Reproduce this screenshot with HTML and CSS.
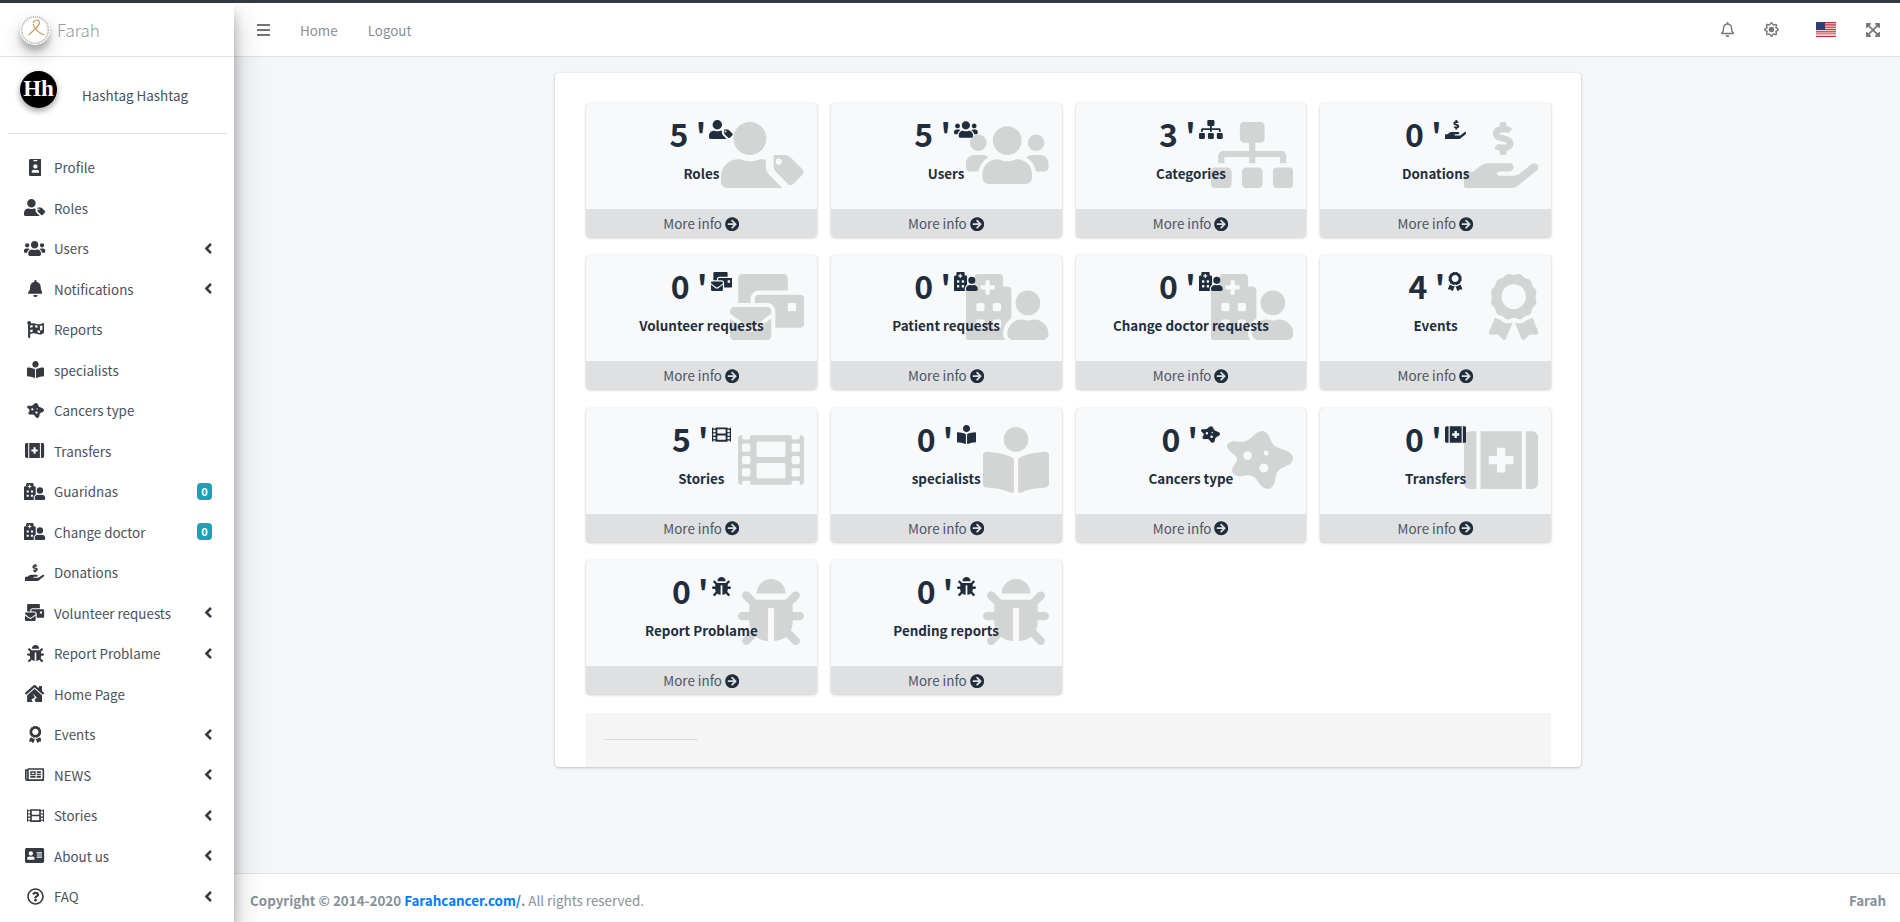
FILE: index.html
```html
<!DOCTYPE html>
<html lang="en">
<head>
    <meta charset="UTF-8">
    <title>Farah</title>
    <link rel="stylesheet" href="styles.css">
</head>
<body>
<svg class="sprite" aria-hidden="true">
    <defs>
        <path id="id-badge" d="M336 0H48C21.5 0 0 21.5 0 48v416c0 26.5 21.5 48 48 48h288c26.5 0 48-21.5 48-48V48c0-26.5-21.5-48-48-48zM144 32h96c8.8 0 16 7.2 16 16s-7.2 16-16 16h-96c-8.8 0-16-7.2-16-16s7.2-16 16-16zm48 128c35.3 0 64 28.7 64 64s-28.7 64-64 64-64-28.7-64-64 28.7-64 64-64zm112 236.8c0 10.6-10 19.2-22.4 19.2H102.4C90 416 80 407.4 80 396.8v-19.2c0-31.8 30.1-57.6 67.2-57.6h5c12.3 5.1 25.7 8 39.8 8s27.6-2.9 39.8-8h5c37.1 0 67.2 25.8 67.2 57.6v19.2z"/>
        <path id="user-tag" fill-rule="evenodd" d="M224 256A128 128 0 1 0 224 0a128 128 0 0 0 0 256zM48 512a48 48 0 0 1-48-48v-41.6C0 348.1 60.2 288 134.4 288h16.7c22.2 10.2 46.9 16 72.9 16s50.7-5.8 72.9-16h16.7c12 0 23 1.5 34 4.5V344c0 25 10 50 28 68l100 100zM630.6 364.9l-90.3-90.2c-12-12-28.3-18.7-45.3-18.7h-79c-4.4 0-8 3.6-8 8v79.3c0 17 6.7 33.2 18.7 45.2l90.3 90.2c12.5 12.5 32.8 12.5 45.2 0l68.7-68.7c12.5-12.4 12.5-32.7-.3-45.1zM448 331a24 24 0 1 1 0-48 24 24 0 0 1 0 48z"/>
        <path id="users" d="M96 224c35.3 0 64-28.7 64-64s-28.7-64-64-64-64 28.7-64 64 28.7 64 64 64zm448 0c35.3 0 64-28.7 64-64s-28.7-64-64-64-64 28.7-64 64 28.7 64 64 64zm32 32h-64c-17.6 0-33.5 7.1-45.1 18.6 40.3 22.1 68.9 62 75.1 109.4h66c17.7 0 32-14.3 32-32v-32c0-35.3-28.7-64-64-64zm-256 0c61.9 0 112-50.1 112-112S381.9 32 320 32 208 82.1 208 144s50.1 112 112 112zm76.8 32h-8.3c-20.8 10-43.9 16-68.5 16s-47.6-6-68.5-16h-8.3C179.6 288 128 339.6 128 403.2V432c0 26.5 21.5 48 48 48h288c26.5 0 48-21.5 48-48v-28.8c0-63.6-51.6-115.2-115.2-115.2zm-223.7-13.4C161.5 263.1 145.6 256 128 256H64c-35.3 0-64 28.7-64 64v32c0 17.7 14.3 32 32 32h65.9c6.3-47.4 34.9-87.3 75.2-109.4z"/>
        <path id="bell" d="M224 512c35.32 0 63.97-28.65 63.97-64H160.03c0 35.35 28.65 64 63.97 64zm215.39-149.71c-19.32-20.76-55.47-51.99-55.47-154.29 0-77.7-54.48-139.9-127.94-155.16V32c0-17.67-14.32-32-31.98-32s-31.98 14.33-31.98 32v20.84C118.56 68.1 64.08 130.3 64.08 208c0 102.3-36.15 133.53-55.47 154.29-6 6.45-8.66 14.16-8.61 21.71.11 16.4 12.98 32 32.1 32h383.8c19.12 0 32-15.6 32.1-32 .05-7.55-2.61-15.27-8.61-21.71z"/>
        <path id="bell-o" d="M439.39 362.29c-19.32-20.76-55.47-51.99-55.47-154.29 0-77.7-54.48-139.9-127.94-155.16V32c0-17.67-14.32-32-31.98-32s-31.98 14.33-31.98 32v20.84C118.56 68.1 64.08 130.3 64.08 208c0 102.3-36.15 133.53-55.47 154.29-6 6.45-8.66 14.16-8.61 21.71.11 16.4 12.98 32 32.1 32h383.8c19.12 0 32-15.6 32.1-32 .05-7.55-2.61-15.27-8.61-21.71zM67.53 368c21.22-27.97 44.42-74.33 44.53-159.42 0-.2-.06-.38-.06-.58 0-61.86 50.14-112 112-112s112 50.14 112 112c0 .2-.06.38-.06.58.11 85.1 23.31 131.46 44.53 159.42H67.53zM224 512c35.32 0 63.97-28.65 63.97-64H160.03c0 35.35 28.65 64 63.97 64z"/>
        <path id="flag" fill-rule="evenodd" d="M466.5 66.9c-34.3 15.9-76.5 31.9-117 31.9C296 98.8 251.7 64 184.3 64c-25 0-47.3 4.4-68 12 2.8-7.3 4.1-15.2 3.6-23.6C118.1 24 94.8 1.2 66.3 0 34.3-1.3 8 24.3 8 56c0 19 9.5 35.8 24 45.9V488c0 13.3 10.7 24 24 24h16c13.3 0 24-10.7 24-24v-94.4c28.3-12.1 63.6-22.1 114.4-22.1 53.6 0 97.8 34.8 165.2 34.8 48.2 0 86.7-16.3 122.5-40.9 8.7-6 13.8-15.8 13.8-26.4V95.9c.1-23.3-24.2-38.8-45.4-29zM96 134c24-9 48-15 73.6-17v68c-26 3-50 9-73.6 18zM243.2 118c26 6 49 15 73.6 22v72c-25-6-48-16-73.6-22zM390 146c25-3 48-11 74-21v68c-24 11-48 19-74 22zM169.6 254c-26 3-50 9-73.6 18v68c24-9 48-15 73.6-18zM316.8 280v68c26 7 49 14 73.6 16v-70c-26 1-49-7-73.6-14zM464 266c-24 14-48 24-73.6 28v-79c26-2 50-10 73.6-22z"/>
        <path id="book-reader" d="M352 96c0-53.02-42.98-96-96-96s-96 42.98-96 96 42.98 96 96 96 96-42.98 96-96zM233.59 241.1c-59.33-36.32-155.43-46.3-203.79-49.05C13.55 191.13 0 203.51 0 219.14v222.8c0 14.33 11.59 26.28 26.49 27.05 43.66 2.29 131.99 10.68 193.04 41.43 9.37 4.72 20.48-1.71 20.48-11.87V252.56c-.01-4.67-2.32-8.95-6.42-11.46zm248.61-49.05c-48.35 2.74-144.46 12.73-203.78 49.05-4.1 2.51-6.41 6.96-6.41 11.63v245.79c0 10.19 11.14 16.63 20.54 11.9 61.04-30.72 149.32-39.11 192.97-41.4 14.9-.78 26.49-12.73 26.49-27.06V219.14c-.01-15.63-13.56-28.01-29.81-27.09z"/>
        <path id="disease" fill-rule="evenodd" d="M270 32C310 30 330 70 345 115C355 145 390 160 435 175C485 190 512 215 512 245C512 280 475 300 430 318C395 332 380 360 375 405C370 450 345 480 312 480C280 480 255 450 230 410C210 380 180 368 135 378C85 390 40 370 40 335C40 300 78 280 78 248C78 215 15 195 3 160C-8 125 30 108 75 112C115 116 150 118 180 90C210 60 235 32 270 32ZM159 189a33 33 0 1 0 0 66a33 33 0 1 0 0-66ZM304 185a19 19 0 1 0 0 38a19 19 0 1 0 0-38ZM286 283a35 35 0 1 0 0 70a35 35 0 1 0 0-70Z"/>
        <path id="first-aid" d="M0 80v352c0 26.5 21.5 48 48 48h48V32H48C21.5 32 0 53.5 0 80zm128 400h320V32H128v448zm64-248c0-4.4 3.6-8 8-8h56v-56c0-4.4 3.6-8 8-8h48c4.4 0 8 3.6 8 8v56h56c4.4 0 8 3.6 8 8v48c0 4.4-3.6 8-8 8h-56v56c0 4.4-3.6 8-8 8h-48c-4.4 0-8-3.6-8-8v-56h-56c-4.4 0-8-3.6-8-8v-48zM528 32h-48v448h48c26.5 0 48-21.5 48-48V80c0-26.5-21.5-48-48-48z"/>
        <path id="hospital-user" fill-rule="evenodd" d="M480 320a96 96 0 1 0-96-96 96 96 0 0 0 96 96zm48 32a22.88 22.88 0 0 0-7.06 1.09 124.76 124.76 0 0 1-81.89 0A22.82 22.82 0 0 0 432 352a112 112 0 0 0-112 112.62c.14 26.26 21.73 47.38 48 47.38h224c26.27 0 47.86-21.12 48-47.38A112 112 0 0 0 528 352zm-198.09 10.45A145.19 145.19 0 0 1 352 344.62V128a32 32 0 0 0-32-32h-32V32a32 32 0 0 0-32-32H96a32 32 0 0 0-32 32v64H32a32 32 0 0 0-32 32v368a16 16 0 0 0 16 16h288.31A78.62 78.62 0 0 1 288 464.79a143.06 143.06 0 0 1 41.91-102.34zM92 352h40a12 12 0 0 1 12 12v40a12 12 0 0 1-12 12H92a12 12 0 0 1-12-12v-40a12 12 0 0 1 12-12zM92 224h40a12 12 0 0 1 12 12v40a12 12 0 0 1-12 12H92a12 12 0 0 1-12-12v-40a12 12 0 0 1 12-12zM220 352h40a12 12 0 0 1 12 12v40a12 12 0 0 1-12 12h-40a12 12 0 0 1-12-12v-40a12 12 0 0 1 12-12zM220 224h40a12 12 0 0 1 12 12v40a12 12 0 0 1-12 12h-40a12 12 0 0 1-12-12v-40a12 12 0 0 1 12-12zM160 48h16a8 8 0 0 1 8 8v32h32a8 8 0 0 1 8 8v16a8 8 0 0 1-8 8h-32v32a8 8 0 0 1-8 8h-16a8 8 0 0 1-8-8v-32h-32a8 8 0 0 1-8-8V96a8 8 0 0 1 8-8h32V56a8 8 0 0 1 8-8z"/>
        <path id="hand-usd" d="M271.06 144.3l54.27 14.3a8.59 8.59 0 0 1 6.63 8.1c0 4.6-4.09 8.4-9.12 8.4h-35.6a30 30 0 0 1-11.19-2.2c-5.24-2.2-11.28-1.7-15.3 2l-19 17.5a11.68 11.68 0 0 0-2.25 2.66 11.42 11.42 0 0 0 3.88 15.74 83.77 83.77 0 0 0 34.51 11.5V240c0 8.8 7.83 16 17.37 16h17.37c9.55 0 17.38-7.2 17.38-16v-17.6c32.93-3.6 57.84-31 53.5-63-3.15-23-22.46-41.3-46.56-47.7l-54.27-14.3a8.59 8.59 0 0 1-6.63-8.1c0-4.6 4.09-8.4 9.12-8.4h35.6A30 30 0 0 1 332 83.1c5.23 2.2 11.28 1.7 15.3-2l19-17.5a11.31 11.31 0 0 0 2.17-2.6 11.43 11.43 0 0 0-3.84-15.78 83.82 83.82 0 0 0-34.52-11.5V16c0-8.8-7.82-16-17.37-16h-17.37C285.82 0 278 7.2 278 16v17.6c-32.89 3.6-57.85 31-53.51 63 3.14 23 22.51 41.3 46.57 47.7zM565.27 328.1c-11.8-10.7-30.2-10-42.6 0L430.27 402a63.64 63.64 0 0 1-40 14H272a16 16 0 0 1 0-32h78.29c15.9 0 30.71-10.9 33.25-26.6a31.2 31.2 0 0 0 .46-5.46A32 32 0 0 0 352 320H192a117.66 117.66 0 0 0-74.1 26.29L71.4 384H16a16 16 0 0 0-16 16v96a16 16 0 0 0 16 16h356.77a64 64 0 0 0 40-14L564 377a32 32 0 0 0 1.28-48.9z"/>
        <path id="mail-bulk" d="M160 448c-25.6 0-51.2-22.4-64-32-64-44.8-83.2-60.8-96-70.4V480c0 17.67 14.33 32 32 32h256c17.67 0 32-14.33 32-32V345.6c-12.8 9.6-32 25.6-96 70.4-12.8 9.6-38.4 32-64 32zm128-192H32c-17.67 0-32 14.33-32 32v16c25.6 19.2 22.4 19.2 115.2 86.4 9.6 6.4 28.8 25.6 44.8 25.6s35.2-19.2 44.8-22.4c92.8-67.2 89.6-67.2 115.2-86.4V288c0-17.67-14.33-32-32-32zm256-96H224c-17.67 0-32 14.33-32 32v32h96c33.21 0 60.59 25.42 63.71 57.82l.29-.22V416h192c17.67 0 32-14.33 32-32V192c0-17.67-14.33-32-32-32zm-32 128h-64v-64h64v64zm-352-96c0-35.29 28.71-64 64-64h224V32c0-17.67-14.33-32-32-32H96C78.33 0 64 14.33 64 32v192h96v-32z"/>
        <path id="bug" d="M511.988 288.9c-.478 17.43-15.217 31.1-32.653 31.1H424v16c0 21.864-4.882 42.584-13.6 61.145l60.228 60.228c12.496 12.497 12.496 32.758 0 45.255-12.498 12.497-32.759 12.496-45.256 0l-54.736-54.736C345.886 467.965 314.351 480 280 480V236c0-6.627-5.373-12-12-12h-24c-6.627 0-12 5.373-12 12v244c-34.351 0-65.886-12.035-90.636-32.108l-54.736 54.736c-12.498 12.497-32.759 12.496-45.256 0-12.496-12.497-12.496-32.758 0-45.255l60.228-60.228C92.882 378.584 88 357.864 88 336v-16H32.666C15.23 320 .491 306.33.013 288.9-.484 270.816 14.028 256 32 256h56v-58.745l-46.628-46.628c-12.496-12.497-12.496-32.758 0-45.255 12.498-12.497 32.758-12.497 45.256 0L141.255 160h229.489l54.627-54.627c12.498-12.497 32.758-12.497 45.256 0 12.496 12.497 12.496 32.758 0 45.255L424 197.255V256h56c17.972 0 32.484 14.816 31.988 32.9zM257 0c-61.856 0-112 50.144-112 112h224C369 50.144 318.856 0 257 0z"/>
        <path id="house-damage" d="M288 114.96L69.47 307.71c-1.62 1.46-3.69 2.14-5.47 3.35V496c0 8.84 7.16 16 16 16h149.23L192 439.19l104.11-64-60.16-119.22L358 387l-70 50 33 75h175c8.84 0 16-7.16 16-16V311.1c-1.7-1.16-3.72-1.82-5.26-3.2L288 114.96zm282.69 121.32L512 184.45V48c0-8.84-7.16-16-16-16h-64c-8.84 0-16 7.16-16 16v51.69L314.75 10.31C307.12 3.45 297.56.01 288 0s-19.1 3.41-26.7 10.27L5.31 236.28c-6.57 5.91-7.12 16.02-1.21 22.6l21.4 23.82c5.9 6.57 16.02 7.12 22.6 1.21L277.42 81.63c6.05-5.33 15.12-5.33 21.17 0L527.91 283.9c6.57 5.9 16.69 5.36 22.6-1.21l21.4-23.82c5.9-6.57 5.36-16.69-1.22-22.59z"/>
        <path id="award" d="M97.12 362.63c-8.69-8.69-4.16-6.24-25.12-11.85-9.51-2.55-17.87-7.45-25.43-13.32L1.2 448.7c-4.39 10.77 3.81 22.47 15.43 22.03l52.69-2.01L105.56 507c8 8.44 22.04 5.81 26.43-4.96l52.05-127.62c-10.84 6.04-22.87 9.58-35.31 9.58-19.5 0-37.82-7.59-51.61-21.37zM382.8 448.7l-45.37-111.24c-7.56 5.88-15.92 10.77-25.43 13.32-21.07 5.64-16.45 3.18-25.12 11.85-13.79 13.78-32.12 21.37-51.62 21.37-12.44 0-24.47-3.55-35.31-9.58L252 502.04c4.39 10.77 18.44 13.4 26.43 4.96l36.25-38.28 52.69 2.01c11.62.44 19.82-11.27 15.43-22.03zM263 340c15.28-15.55 17.03-14.21 38.79-20.14 13.89-3.79 24.75-14.84 28.47-28.98 7.48-28.4 5.54-24.97 25.95-45.75 10.17-10.35 14.14-25.44 10.42-39.58-7.47-28.38-7.48-24.42 0-52.83 3.72-14.14-.25-29.23-10.42-39.58-20.41-20.78-18.47-17.36-25.95-45.75-3.72-14.14-14.58-25.19-28.47-28.98-27.88-7.61-24.52-5.62-44.95-26.41-10.17-10.35-25-14.4-38.89-10.61-27.87 7.6-23.98 7.61-51.9 0-13.89-3.79-28.72.25-38.89 10.61-20.41 20.78-17.05 18.8-44.94 26.41-13.89 3.79-24.75 14.84-28.47 28.98-7.47 28.39-5.54 24.97-25.95 45.75-10.17 10.35-14.15 25.44-10.42 39.58 7.47 28.36 7.48 24.4 0 52.82-3.72 14.14.25 29.23 10.42 39.59 20.41 20.78 18.47 17.35 25.95 45.75 3.72 14.14 14.58 25.19 28.47 28.98C104.6 325.96 106.27 325 121 340c13.23 13.47 33.84 15.88 49.74 5.82a39.676 39.676 0 0 1 42.53 0c15.89 10.06 36.5 7.65 49.73-5.82zM97.66 175.96c0-53.03 42.24-96.02 94.34-96.02s94.34 42.99 94.34 96.02-42.24 96.02-94.34 96.02-94.34-42.99-94.34-96.02z"/>
        <path id="newspaper" d="M552 64H112c-20.858 0-38.643 13.377-45.248 32H24c-13.255 0-24 10.745-24 24v272c0 30.928 25.072 56 56 56h496c13.255 0 24-10.745 24-24V88c0-13.255-10.745-24-24-24zM48 392V144h16v248c0 4.411-3.589 8-8 8s-8-3.589-8-8zm480 8H111.422c.374-2.614.578-5.283.578-8V112h416v288zM172 280h136c6.627 0 12-5.373 12-12v-96c0-6.627-5.373-12-12-12H172c-6.627 0-12 5.373-12 12v96c0 6.627 5.373 12 12 12zm28-80h80v40h-80v-40zm-40 140v-24c0-6.627 5.373-12 12-12h136c6.627 0 12 5.373 12 12v24c0 6.627-5.373 12-12 12H172c-6.627 0-12-5.373-12-12zm192 0v-24c0-6.627 5.373-12 12-12h104c6.627 0 12 5.373 12 12v24c0 6.627-5.373 12-12 12H364c-6.627 0-12-5.373-12-12zm0-144v-24c0-6.627 5.373-12 12-12h104c6.627 0 12 5.373 12 12v24c0 6.627-5.373 12-12 12H364c-6.627 0-12-5.373-12-12zm0 72v-24c0-6.627 5.373-12 12-12h104c6.627 0 12 5.373 12 12v24c0 6.627-5.373 12-12 12H364c-6.627 0-12-5.373-12-12z"/>
        <path id="film" d="M488 64h-8v20c0 6.6-5.4 12-12 12h-40c-6.6 0-12-5.4-12-12V64H96v20c0 6.6-5.4 12-12 12H44c-6.6 0-12-5.4-12-12V64h-8C10.7 64 0 74.7 0 88v336c0 13.3 10.7 24 24 24h8v-20c0-6.6 5.4-12 12-12h40c6.6 0 12 5.4 12 12v20h320v-20c0-6.6 5.4-12 12-12h40c6.6 0 12 5.4 12 12v20h8c13.3 0 24-10.7 24-24V88c0-13.3-10.7-24-24-24zM96 372c0 6.6-5.4 12-12 12H44c-6.6 0-12-5.4-12-12v-40c0-6.6 5.4-12 12-12h40c6.6 0 12 5.4 12 12v40zm0-96c0 6.6-5.4 12-12 12H44c-6.6 0-12-5.4-12-12v-40c0-6.6 5.4-12 12-12h40c6.6 0 12 5.4 12 12v40zm0-96c0 6.6-5.4 12-12 12H44c-6.6 0-12-5.4-12-12v-40c0-6.6 5.4-12 12-12h40c6.6 0 12 5.4 12 12v40zm272 208c0 6.6-5.4 12-12 12H156c-6.6 0-12-5.4-12-12v-96c0-6.6 5.4-12 12-12h200c6.6 0 12 5.4 12 12v96zm0-168c0 6.6-5.4 12-12 12H156c-6.6 0-12-5.4-12-12v-96c0-6.6 5.4-12 12-12h200c6.6 0 12 5.4 12 12v96zm112 152c0 6.6-5.4 12-12 12h-40c-6.6 0-12-5.4-12-12v-40c0-6.6 5.4-12 12-12h40c6.6 0 12 5.4 12 12v40zm0-96c0 6.6-5.4 12-12 12h-40c-6.6 0-12-5.4-12-12v-40c0-6.6 5.4-12 12-12h40c6.6 0 12 5.4 12 12v40zm0-96c0 6.6-5.4 12-12 12h-40c-6.6 0-12-5.4-12-12v-40c0-6.6 5.4-12 12-12h40c6.6 0 12 5.4 12 12v40z"/>
        <path id="address-card" d="M528 32H48C21.5 32 0 53.5 0 80v352c0 26.5 21.5 48 48 48h480c26.5 0 48-21.5 48-48V80c0-26.5-21.5-48-48-48zm-352 96c35.3 0 64 28.7 64 64s-28.7 64-64 64-64-28.7-64-64 28.7-64 64-64zm112 236.8c0 10.6-10 19.2-22.4 19.2H86.4C74 384 64 375.4 64 364.8v-19.2c0-31.8 30.1-57.6 67.2-57.6h5c12.3 5.1 25.7 8 39.8 8s27.6-2.9 39.8-8h5c37.1 0 67.2 25.8 67.2 57.6v19.2zM512 312c0 4.4-3.6 8-8 8H360c-4.4 0-8-3.6-8-8v-16c0-4.4 3.6-8 8-8h144c4.4 0 8 3.6 8 8v16zm0-64c0 4.4-3.6 8-8 8H360c-4.4 0-8-3.6-8-8v-16c0-4.4 3.6-8 8-8h144c4.4 0 8 3.6 8 8v16zm0-64c0 4.4-3.6 8-8 8H360c-4.4 0-8-3.6-8-8v-16c0-4.4 3.6-8 8-8h144c4.4 0 8 3.6 8 8v16z"/>
        <path id="question" d="M256 8C119.043 8 8 119.083 8 256c0 136.997 111.043 248 248 248s248-111.003 248-248C504 119.083 392.957 8 256 8zm0 448c-110.532 0-200-89.431-200-200 0-110.495 89.472-200 200-200 110.491 0 200 89.471 200 200 0 110.53-89.431 200-200 200zm107.244-255.2c0 67.052-72.421 68.084-72.421 92.863V300c0 6.627-5.373 12-12 12h-45.647c-6.627 0-12-5.373-12-12v-8.659c0-35.745 27.1-50.034 47.579-61.516 17.561-9.845 28.324-16.541 28.324-29.579 0-17.246-21.999-28.693-39.784-28.693-23.189 0-33.894 10.977-48.942 29.969-4.057 5.12-11.46 6.071-16.666 2.124l-27.824-21.098c-5.107-3.872-6.251-11.066-2.644-16.363C184.846 131.491 214.94 112 261.794 112c49.071 0 101.45 38.304 101.45 88.8zM298 368c0 23.159-18.841 42-42 42s-42-18.841-42-42 18.841-42 42-42 42 18.841 42 42z"/>
        <path id="sitemap" d="M128 352H32c-17.67 0-32 14.33-32 32v96c0 17.67 14.33 32 32 32h96c17.67 0 32-14.33 32-32v-96c0-17.67-14.33-32-32-32zm-24-80h192v48h48v-48h192v48h48v-57.59c0-21.17-17.23-38.41-38.41-38.41H344v-64h40c17.67 0 32-14.33 32-32V32c0-17.67-14.33-32-32-32H256c-17.67 0-32 14.33-32 32v96c0 17.67 14.33 32 32 32h40v64H94.41C73.23 224 56 241.23 56 262.41V320h48v-48zm264 80h-96c-17.67 0-32 14.33-32 32v96c0 17.67 14.33 32 32 32h96c17.67 0 32-14.33 32-32v-96c0-17.67-14.33-32-32-32zm240 0h-96c-17.67 0-32 14.33-32 32v96c0 17.67 14.33 32 32 32h96c17.67 0 32-14.33 32-32v-96c0-17.67-14.33-32-32-32z"/>
        <path id="arrow" d="M256 8c137 0 248 111 248 248S393 504 256 504 8 393 8 256 119 8 256 8zm-28.9 143.6l75.5 72.4H120c-13.3 0-24 10.7-24 24v16c0 13.3 10.7 24 24 24h182.6l-75.5 72.4c-9.7 9.3-9.9 24.8-.4 34.3l11 10.9c9.4 9.4 24.6 9.4 33.9 0L404.3 273c9.4-9.4 9.4-24.6 0-33.9L271.6 106.3c-9.4-9.4-24.6-9.4-33.9 0l-11 10.9c-9.5 9.6-9.3 25.1.4 34.4z"/>
        <path id="angle" d="M31.7 239l136-136c9.4-9.4 24.6-9.4 33.9 0l22.6 22.6c9.4 9.4 9.4 24.6 0 33.9L127.9 256l96.4 96.4c9.4 9.4 9.4 24.6 0 33.9L201.7 409c-9.4 9.4-24.6 9.4-33.9 0l-136-136c-9.5-9.4-9.5-24.6-.1-34z"/>
        <path id="sun" fill-rule="evenodd" d="M494.2 221.9l-59.8-40.5 13.7-71c2.6-13.2-1.6-26.8-11.1-36.4-9.6-9.5-23.2-13.7-36.2-11.1l-70.9 13.7-40.4-59.9c-15.1-22.3-51.9-22.3-67 0l-40.4 59.9-70.8-13.7C98 60.4 84.5 64.5 75 74.1c-9.5 9.6-13.7 23.1-11.1 36.3l13.7 71-59.8 40.5C6.6 229.5 0 242 0 255.5s6.7 26 17.8 33.5l59.8 40.5-13.7 71c-2.6 13.2 1.6 26.8 11.1 36.3 9.5 9.5 22.9 13.7 36.3 11.1l70.8-13.7 40.4 59.9C230 505.3 242.6 512 256 512s26-6.7 33.5-17.8l40.4-59.9 70.9 13.7c13.4 2.7 26.8-1.6 36.3-11.1 9.5-9.5 13.6-23.1 11.1-36.3l-13.7-71 59.8-40.5c11.1-7.5 17.8-20.1 17.8-33.5-.1-13.6-6.7-26.1-17.9-33.7zm-112.9 85.6l17.6 91.2-91-17.6L256 458l-51.9-77-90.9 17.6 17.6-91.2-76.8-52 76.8-52-17.6-91.2 91 17.6L256 53l51.9 76.9 91-17.6-17.6 91.1 76.8 52-76.8 52.1zM256 161a95 95 0 1 0 0 190 95 95 0 0 0 0-190z"/>
        <path id="expand" d="M448 344v112a23.94 23.94 0 0 1-24 24H312c-21.39 0-32.09-25.9-17-41l36.2-36.2L224 295.6 116.77 402.9 153 439c15.09 15.1 4.39 41-17 41H24a23.94 23.94 0 0 1-24-24V344c0-21.4 25.89-32.1 41-17l36.19 36.2L184.46 256 77.18 148.7 41 185c-15.1 15.1-41 4.4-41-17V56a23.94 23.94 0 0 1 24-24h112c21.39 0 32.09 25.9 17 41l-36.2 36.2L224 216.4l107.23-107.3L295 73c-15.09-15.1-4.39-41 17-41h112a23.94 23.94 0 0 1 24 24v112c0 21.4-25.89 32.1-41 17l-36.19-36.2L263.54 256l107.28 107.3L407 327.1c15.1-15.2 41-4.5 41 16.9z"/>
    </defs>
</svg>

<div class="topline"></div>
<div class="wrapper">

    <!-- Sidebar -->
    <aside class="sidebar">
        <div class="brand">
            <svg class="brand-logo" viewBox="0 0 30 30">
                <circle cx="15" cy="15" r="15" fill="#fff"/>
                <circle cx="15" cy="15" r="13.300" fill="none" stroke="#bdb9b2" stroke-width="1.800" stroke-dasharray="1.200 .8"/>
                <path d="M13 8c.5-3 6-4 6.500-1s-4 7-11 13M13 9c1.500 4 5 9 11.500 11" fill="none" stroke="#c79c66" stroke-width="1.100"/>
            </svg>
            <span class="brand-text">Farah</span>
        </div>
        <div class="user-panel">
            <div class="avatar">Hh</div>
            <div class="user-name">Hashtag Hashtag</div>
        </div>
        <ul class="nav">
            <li><span class="nav-ico"><svg viewBox="0 0 384 512"><use href="#id-badge"/></svg></span>Profile</li>
            <li><span class="nav-ico"><svg viewBox="0 0 640 512"><use href="#user-tag"/></svg></span>Roles</li>
            <li><span class="nav-ico"><svg viewBox="0 0 640 512"><use href="#users"/></svg></span>Users<svg class="chev" viewBox="0 0 256 512"><use href="#angle"/></svg></li>
            <li><span class="nav-ico"><svg viewBox="0 0 448 512"><use href="#bell"/></svg></span>Notifications<svg class="chev" viewBox="0 0 256 512"><use href="#angle"/></svg></li>
            <li><span class="nav-ico"><svg viewBox="0 0 512 512"><use href="#flag"/></svg></span>Reports</li>
            <li><span class="nav-ico"><svg viewBox="0 0 512 512"><use href="#book-reader"/></svg></span>specialists</li>
            <li><span class="nav-ico"><svg viewBox="0 0 512 512"><use href="#disease"/></svg></span>Cancers type</li>
            <li><span class="nav-ico"><svg viewBox="0 0 576 512"><use href="#first-aid"/></svg></span>Transfers</li>
            <li><span class="nav-ico"><svg viewBox="0 0 640 512"><use href="#hospital-user"/></svg></span>Guaridnas<span class="badge">0</span></li>
            <li><span class="nav-ico"><svg viewBox="0 0 640 512"><use href="#hospital-user"/></svg></span>Change doctor<span class="badge">0</span></li>
            <li><span class="nav-ico"><svg viewBox="0 0 576 512"><use href="#hand-usd"/></svg></span>Donations</li>
            <li><span class="nav-ico"><svg viewBox="0 0 576 512"><use href="#mail-bulk"/></svg></span>Volunteer requests<svg class="chev" viewBox="0 0 256 512"><use href="#angle"/></svg></li>
            <li><span class="nav-ico"><svg viewBox="0 0 512 512"><use href="#bug"/></svg></span>Report Problame<svg class="chev" viewBox="0 0 256 512"><use href="#angle"/></svg></li>
            <li><span class="nav-ico"><svg viewBox="0 0 576 512"><use href="#house-damage"/></svg></span>Home Page</li>
            <li><span class="nav-ico"><svg viewBox="0 0 384 512"><use href="#award"/></svg></span>Events<svg class="chev" viewBox="0 0 256 512"><use href="#angle"/></svg></li>
            <li><span class="nav-ico"><svg viewBox="0 0 576 512"><use href="#newspaper"/></svg></span>NEWS<svg class="chev" viewBox="0 0 256 512"><use href="#angle"/></svg></li>
            <li><span class="nav-ico"><svg viewBox="0 0 512 512"><use href="#film"/></svg></span>Stories<svg class="chev" viewBox="0 0 256 512"><use href="#angle"/></svg></li>
            <li><span class="nav-ico"><svg viewBox="0 0 576 512"><use href="#address-card"/></svg></span>About us<svg class="chev" viewBox="0 0 256 512"><use href="#angle"/></svg></li>
            <li><span class="nav-ico"><svg viewBox="0 0 512 512"><use href="#question"/></svg></span>FAQ<svg class="chev" viewBox="0 0 256 512"><use href="#angle"/></svg></li>
        </ul>
    </aside>

    <div class="main">
        <!-- Top navbar -->
        <nav class="navbar">
            <div class="hamburger"><span></span><span></span><span></span></div>
            <a class="nav-link">Home</a>
            <a class="nav-link">Logout</a>
            <div class="nav-right">
                <svg class="nav-icon bell" viewBox="0 0 448 512"><use href="#bell-o"/></svg>
                <svg class="nav-icon sun" viewBox="0 0 512 512"><use href="#sun"/></svg>
                <svg class="us-flag" viewBox="0 0 20 15">
                    <rect width="20" height="15" fill="#f3c9cd"/>
                    <path d="M0 .6h20M0 2.900h20M0 5.200h20M0 7.500h20M0 9.800h20M0 12.100h20M0 14.400h20" stroke="#c8313f" stroke-width="1.100"/>
                    <path d="M0 12.900h20" stroke="#fff" stroke-width="1"/>
                    <rect width="9" height="8" fill="#2f3f73"/>
                </svg>
                <svg class="nav-icon expand" viewBox="0 0 448 512"><use href="#expand"/></svg>
            </div>
        </nav>

        <!-- Dashboard -->
        <main class="content">
            <section class="panel">
                <div class="stats">
                    <div class="stat">
                        <svg class="stat-bg" viewBox="0 0 640 512"><use href="#user-tag"/></svg>
                        <div class="stat-body">
                            <h3>5 ' <svg viewBox="0 0 640 512"><use href="#user-tag"/></svg></h3>
                            <p>Roles</p>
                        </div>
                        <a class="stat-more">More info <svg viewBox="0 0 512 512"><use href="#arrow"/></svg></a>
                    </div>
                    <div class="stat">
                        <svg class="stat-bg" viewBox="0 0 640 512"><use href="#users"/></svg>
                        <div class="stat-body">
                            <h3>5 ' <svg viewBox="0 0 640 512"><use href="#users"/></svg></h3>
                            <p>Users</p>
                        </div>
                        <a class="stat-more">More info <svg viewBox="0 0 512 512"><use href="#arrow"/></svg></a>
                    </div>
                    <div class="stat">
                        <svg class="stat-bg" viewBox="0 0 640 512"><use href="#sitemap"/></svg>
                        <div class="stat-body">
                            <h3>3 ' <svg viewBox="0 0 640 512"><use href="#sitemap"/></svg></h3>
                            <p>Categories</p>
                        </div>
                        <a class="stat-more">More info <svg viewBox="0 0 512 512"><use href="#arrow"/></svg></a>
                    </div>
                    <div class="stat">
                        <svg class="stat-bg" viewBox="0 0 576 512"><use href="#hand-usd"/></svg>
                        <div class="stat-body">
                            <h3>0 ' <svg viewBox="0 0 576 512"><use href="#hand-usd"/></svg></h3>
                            <p>Donations</p>
                        </div>
                        <a class="stat-more">More info <svg viewBox="0 0 512 512"><use href="#arrow"/></svg></a>
                    </div>
                    <div class="stat">
                        <svg class="stat-bg" viewBox="0 0 576 512"><use href="#mail-bulk"/></svg>
                        <div class="stat-body">
                            <h3>0 ' <svg viewBox="0 0 576 512"><use href="#mail-bulk"/></svg></h3>
                            <p>Volunteer requests</p>
                        </div>
                        <a class="stat-more">More info <svg viewBox="0 0 512 512"><use href="#arrow"/></svg></a>
                    </div>
                    <div class="stat">
                        <svg class="stat-bg" viewBox="0 0 640 512"><use href="#hospital-user"/></svg>
                        <div class="stat-body">
                            <h3>0 ' <svg viewBox="0 0 640 512"><use href="#hospital-user"/></svg></h3>
                            <p>Patient requests</p>
                        </div>
                        <a class="stat-more">More info <svg viewBox="0 0 512 512"><use href="#arrow"/></svg></a>
                    </div>
                    <div class="stat">
                        <svg class="stat-bg" viewBox="0 0 640 512"><use href="#hospital-user"/></svg>
                        <div class="stat-body">
                            <h3>0 ' <svg viewBox="0 0 640 512"><use href="#hospital-user"/></svg></h3>
                            <p>Change doctor requests</p>
                        </div>
                        <a class="stat-more">More info <svg viewBox="0 0 512 512"><use href="#arrow"/></svg></a>
                    </div>
                    <div class="stat">
                        <svg class="stat-bg" viewBox="0 0 384 512"><use href="#award"/></svg>
                        <div class="stat-body">
                            <h3>4 ' <svg viewBox="0 0 384 512"><use href="#award"/></svg></h3>
                            <p>Events</p>
                        </div>
                        <a class="stat-more">More info <svg viewBox="0 0 512 512"><use href="#arrow"/></svg></a>
                    </div>
                    <div class="stat">
                        <svg class="stat-bg" viewBox="0 0 512 512"><use href="#film"/></svg>
                        <div class="stat-body">
                            <h3>5 ' <svg viewBox="0 0 512 512"><use href="#film"/></svg></h3>
                            <p>Stories</p>
                        </div>
                        <a class="stat-more">More info <svg viewBox="0 0 512 512"><use href="#arrow"/></svg></a>
                    </div>
                    <div class="stat">
                        <svg class="stat-bg" viewBox="0 0 512 512"><use href="#book-reader"/></svg>
                        <div class="stat-body">
                            <h3>0 ' <svg viewBox="0 0 512 512"><use href="#book-reader"/></svg></h3>
                            <p>specialists</p>
                        </div>
                        <a class="stat-more">More info <svg viewBox="0 0 512 512"><use href="#arrow"/></svg></a>
                    </div>
                    <div class="stat">
                        <svg class="stat-bg" viewBox="0 0 512 512"><use href="#disease"/></svg>
                        <div class="stat-body">
                            <h3>0 ' <svg viewBox="0 0 512 512"><use href="#disease"/></svg></h3>
                            <p>Cancers type</p>
                        </div>
                        <a class="stat-more">More info <svg viewBox="0 0 512 512"><use href="#arrow"/></svg></a>
                    </div>
                    <div class="stat">
                        <svg class="stat-bg" viewBox="0 0 576 512"><use href="#first-aid"/></svg>
                        <div class="stat-body">
                            <h3>0 ' <svg viewBox="0 0 576 512"><use href="#first-aid"/></svg></h3>
                            <p>Transfers</p>
                        </div>
                        <a class="stat-more">More info <svg viewBox="0 0 512 512"><use href="#arrow"/></svg></a>
                    </div>
                    <div class="stat">
                        <svg class="stat-bg" viewBox="0 0 512 512"><use href="#bug"/></svg>
                        <div class="stat-body">
                            <h3>0 ' <svg viewBox="0 0 512 512"><use href="#bug"/></svg></h3>
                            <p>Report Problame</p>
                        </div>
                        <a class="stat-more">More info <svg viewBox="0 0 512 512"><use href="#arrow"/></svg></a>
                    </div>
                    <div class="stat">
                        <svg class="stat-bg" viewBox="0 0 512 512"><use href="#bug"/></svg>
                        <div class="stat-body">
                            <h3>0 ' <svg viewBox="0 0 512 512"><use href="#bug"/></svg></h3>
                            <p>Pending reports</p>
                        </div>
                        <a class="stat-more">More info <svg viewBox="0 0 512 512"><use href="#arrow"/></svg></a>
                    </div>
                </div>
                <div class="panel-strip"><hr></div>
            </section>
        </main>

        <footer class="footer">
            <span><strong>Copyright © 2014-2020 <a>Farahcancer.com/</a>.</strong> All rights reserved.</span>
            <strong>Farah</strong>
        </footer>
    </div>
</div>
</body>
</html>
```

FILE: styles.css
```css
html, body {
    height: 100%;
}
body {
    margin: 0;
    font-family: "Noto Sans CJK SC", "Source Sans Pro", "Noto Sans", sans-serif;
    font-size: 13.400px;
    line-height: 24px;
    color: #212529;
    background: #f4f6f9;
    overflow: hidden;
}
.sprite {
    position: absolute;
    width: 0;
    height: 0;
}
.topline {
    height: 3px;
    background: #343a40;
}
.wrapper {
    display: flex;
    height: 919px;
}

/* Sidebar */
.sidebar {
    width: 234px;
    flex-shrink: 0;
    background: #fff;
    box-shadow: 0 14px 28px rgba(0,0,0,0.25), 0 10px 10px rgba(0,0,0,0.22);
    position: relative;
    z-index: 2;
}
.brand {
    height: 53px;
    padding-left: 20px;
    display: flex;
    align-items: center;
    gap: 7px;
    border-bottom: 1px solid #dee2e6;
    box-sizing: content-box;
}
.brand-logo {
    width: 30px;
    height: 30px;
    border-radius: 50%;
    box-shadow: 0 10px 20px rgba(0,0,0,0.19), 0 6px 6px rgba(0,0,0,0.23);
}
.brand-text {
    font-size: 17px;
    font-weight: 300;
    color: #9a9a9a;
}
.user-panel {
    height: 77px;
    margin: 0 7px 0 8px;
    padding: 14px 0 0 12px;
    box-sizing: border-box;
    display: flex;
    align-items: flex-start;
    border-bottom: 1px solid #dee2e6;
}
.avatar {
    width: 37px;
    height: 37px;
    border-radius: 50%;
    background: #000;
    color: #fff;
    font-family: "Liberation Serif", serif;
    font-weight: bold;
    font-size: 23px;
    line-height: 35px;
    text-align: center;
    box-shadow: 0 3px 6px rgba(0,0,0,0.16), 0 3px 6px rgba(0,0,0,0.23);
}
.user-name {
    margin: 12px 0 0 25px;
    color: #495057;
}
.nav {
    list-style: none;
    margin: 0;
    padding: 13px 0 0 24px;
}
.nav li {
    height: 40.500px;
    display: flex;
    align-items: center;
    padding-right: 22px;
    color: #4b5259;
}
.nav-ico {
    width: 22px;
    margin-right: 8px;
    display: flex;
    justify-content: center;
}
.nav-ico svg {
    height: 17px;
    fill: #343a40;
}
.chev {
    height: 17px;
    margin-left: auto;
    fill: #343a40;
}
.badge {
    margin-left: auto;
    width: 15px;
    height: 17px;
    border-radius: 4px;
    background: #17a2b8;
    color: #fff;
    font-size: 11px;
    font-weight: 700;
    line-height: 17px;
    text-align: center;
}

/* Navbar */
.main {
    flex: 1;
    min-width: 0;
    display: flex;
    flex-direction: column;
}
.navbar {
    height: 53px;
    box-sizing: content-box;
    background: #fff;
    border-bottom: 1px solid #dee2e6;
    display: flex;
    align-items: center;
    padding: 0 20px 0 23px;
}
.hamburger {
    width: 13px;
    margin-right: 30px;
    display: flex;
    flex-direction: column;
    gap: 3px;
}
.hamburger span {
    height: 2px;
    background: #757575;
}
.nav-link {
    color: #8a8f94;
    margin-right: 30px;
}
.nav-right {
    margin-left: auto;
    display: flex;
    align-items: center;
}
.nav-icon {
    fill: #777;
}
.bell {
    height: 15px;
    margin-right: 30px;
}
.sun {
    height: 15px;
    margin-right: 37px;
}
.us-flag {
    width: 20px;
    height: 15px;
    margin-right: 30px;
}
.expand {
    height: 16px;
}

/* Dashboard */
.content {
    flex: 1;
    min-height: 0;
    padding: 16px 0 0 2px;
    display: flex;
    justify-content: center;
    align-items: flex-start;
}
.panel {
    width: 1026px;
    box-sizing: border-box;
    padding: 30px 30px 0 31px;
    background: #fff;
    border-radius: 4px;
    box-shadow: 0 0 1px rgba(0,0,0,0.125), 0 1px 3px rgba(0,0,0,0.2);
}
.stats {
    display: grid;
    grid-template-columns: repeat(4, 1fr);
    column-gap: 14px;
    row-gap: 18.300px;
}
.stat {
    position: relative;
    height: 134px;
    display: flex;
    flex-direction: column;
    background: #f8f9fa;
    border-radius: 4px;
    box-shadow: 0 0 1px rgba(0,0,0,0.125), 0 1px 3px rgba(0,0,0,0.2);
    overflow: hidden;
    color: #1f2d3d;
}
.stat-bg {
    position: absolute;
    top: 19px;
    right: 13px;
    height: 66px;
    fill: rgba(0,0,0,0.15);
}
.stat-body {
    position: relative;
    flex: 1;
    padding-top: 9px;
    text-align: center;
}
.stat-body h3 {
    margin: 0;
    font-size: 32px;
    font-weight: 700;
    line-height: 42px;
}
.stat-body h3 svg {
    height: 19px;
    margin-left: -4px;
    vertical-align: 8px;
    fill: #1f2d3d;
}
.stat-body p {
    margin: 7px 0 0;
    font-weight: 700;
}
.stat-more {
    height: 28px;
    background: #dfe0e1;
    color: #4c5564;
    text-align: center;
    line-height: 28px;
}
.stat-more svg {
    height: 14.400px;
    vertical-align: -2px;
    fill: #1f2d3d;
}
.panel-strip {
    margin-top: 19px;
    height: 54px;
    box-sizing: border-box;
    padding: 26px 18px 0;
    background: #f5f5f5;
}
.panel-strip hr {
    width: 94px;
    margin: 0;
    border: 0;
    border-top: 1px solid #dcdcdc;
}

/* Footer */
.footer {
    height: 45px;
    box-sizing: content-box;
    background: #fff;
    border-top: 1px solid #dee2e6;
    padding: 3px 14px 0 16px;
    display: flex;
    align-items: center;
    justify-content: space-between;
    color: #869099;
}
.footer a {
    color: #007bff;
}
```
